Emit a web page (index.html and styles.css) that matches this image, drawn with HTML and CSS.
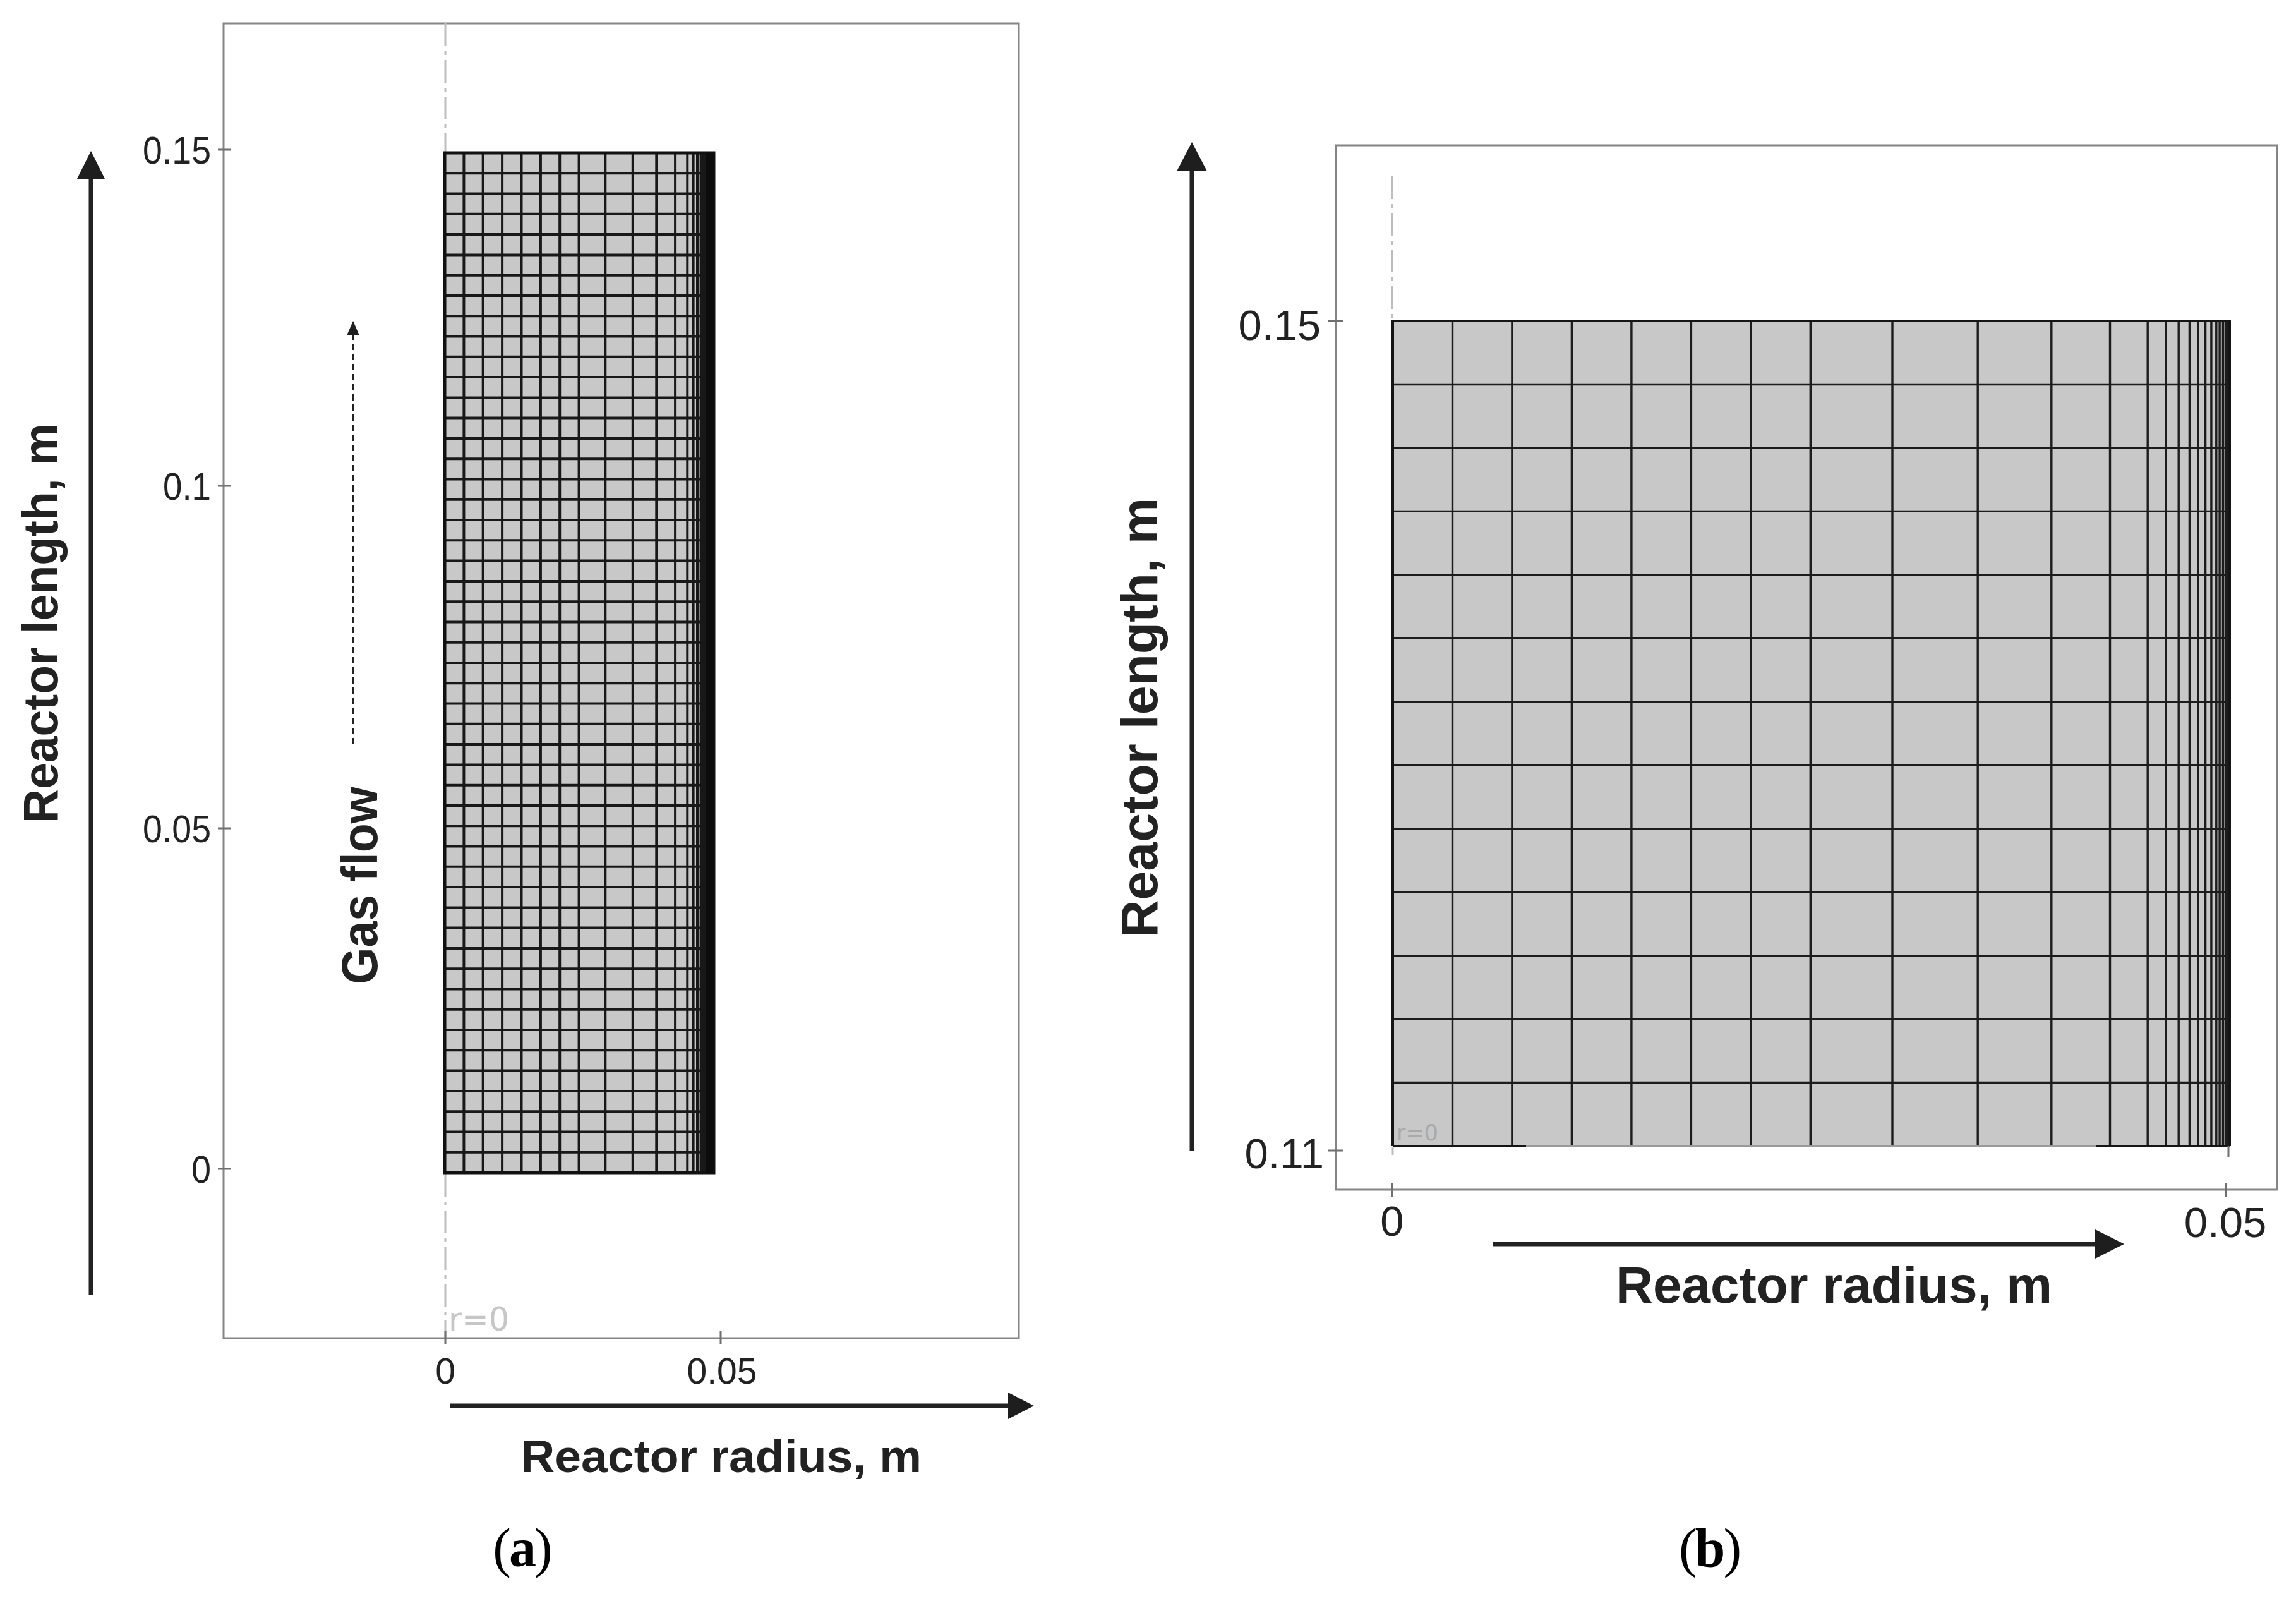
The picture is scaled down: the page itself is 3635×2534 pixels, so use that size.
FILE: index.html
```html
<!DOCTYPE html>
<html lang="en">
<head>
<meta charset="utf-8">
<title>Reactor mesh</title>
<link rel="stylesheet" href="styles.css">
</head>
<body>
<main class="sheet">
  <figure class="panel panel-a">
    <svg class="plot plot-a" width="1720" height="2400" viewBox="0 0 1720 2400" xmlns="http://www.w3.org/2000/svg">
      <!-- frame -->
      <rect class="frame" x="354" y="37" width="1259" height="2081"/>
      <!-- symmetry axis -->
      <path class="axis-line" d="M705 37V240M705 1858V2118"/>
      <!-- mesh -->
      <rect class="mesh-fill" x="704" y="242" width="426" height="1614"/>
      <path class="mesh-a" d="M704 274.3H1130M704 306.6H1130M704 338.8H1130M704 371.1H1130M704 403.4H1130M704 435.7H1130M704 468H1130M704 500.2H1130M704 532.5H1130M704 564.8H1130M704 597.1H1130M704 629.4H1130M704 661.6H1130M704 693.9H1130M704 726.2H1130M704 758.5H1130M704 790.8H1130M704 823H1130M704 855.3H1130M704 887.6H1130M704 919.9H1130M704 952.2H1130M704 984.4H1130M704 1016.7H1130M704 1049H1130M704 1081.3H1130M704 1113.6H1130M704 1145.8H1130M704 1178.1H1130M704 1210.4H1130M704 1242.7H1130M704 1275H1130M704 1307.2H1130M704 1339.5H1130M704 1371.8H1130M704 1404.1H1130M704 1436.4H1130M704 1468.6H1130M704 1500.9H1130M704 1533.2H1130M704 1565.5H1130M704 1597.8H1130M704 1630H1130M704 1662.3H1130M704 1694.6H1130M704 1726.9H1130M704 1759.2H1130M704 1791.4H1130M704 1823.7H1130"/>
      <path class="mesh-a" d="M734.4 242V1856M764.7 242V1856M795.1 242V1856M825.5 242V1856M855.9 242V1856M886.2 242V1856M916.6 242V1856M958.3 242V1856M1001.8 242V1856M1039.3 242V1856M1069.1 242V1856M1088.3 242V1856M1097.6 242V1856M1104 242V1856M1109.6 242V1856M1113.8 242V1856M1117.6 242V1856M1120.6 242V1856M1123.2 242V1856M1124.9 242V1856M1126.6 242V1856M1127.9 242V1856"/>
      <rect class="mesh-border-a" x="704" y="242" width="426" height="1614"/>
      <path class="mesh-band-a" d="M1124 242V1856"/>
      <!-- ticks -->
      <path class="tick-mark" d="M345 237H365M345 769H365M345 1311H365M345 1850H365M705 2107V2127M1141 2107V2127"/>
      <text class="tick-label" x="334" y="259" text-anchor="end" font-size="62" textLength="108" lengthAdjust="spacingAndGlyphs">0.15</text>
      <text class="tick-label" x="334" y="791" text-anchor="end" font-size="62" textLength="76" lengthAdjust="spacingAndGlyphs">0.1</text>
      <text class="tick-label" x="334" y="1333" text-anchor="end" font-size="62" textLength="108" lengthAdjust="spacingAndGlyphs">0.05</text>
      <text class="tick-label" x="334" y="1872" text-anchor="end" font-size="62" textLength="31" lengthAdjust="spacingAndGlyphs">0</text>
      <text class="tick-label" x="705" y="2190" text-anchor="middle" font-size="57">0</text>
      <text class="tick-label" x="1143" y="2190" text-anchor="middle" font-size="57">0.05</text>
      <text class="sym-label" x="710" y="2106" font-size="51">r=0</text>
      <!-- axis arrows -->
      <path class="arrow-shaft" d="M144 2050V278"/>
      <polygon class="arrow-head" points="122,283 166,283 144,239"/>
      <path class="arrow-shaft" d="M713 2225H1600"/>
      <polygon class="arrow-head" points="1596,2204 1596,2246 1637,2225"/>
      <!-- gas flow arrow -->
      <path class="flow-shaft" d="M559 1178V528"/>
      <polygon class="arrow-head" points="549,531 569,531 559,508"/>
      <!-- titles -->
      <text class="axis-title" transform="translate(91 986.5) rotate(-90)" text-anchor="middle" font-size="78" textLength="633" lengthAdjust="spacingAndGlyphs">Reactor length, m</text>
      <text class="axis-title" transform="translate(597 1401.5) rotate(-90)" text-anchor="middle" font-size="80" textLength="313" lengthAdjust="spacingAndGlyphs">Gas flow</text>
      <text class="axis-title" x="1141.5" y="2330" text-anchor="middle" font-size="73" textLength="635" lengthAdjust="spacingAndGlyphs">Reactor radius, m</text>
    </svg>
    <figcaption>(<b>a</b>)</figcaption>
  </figure>

  <figure class="panel panel-b">
    <svg class="plot plot-b" width="1915" height="2400" viewBox="1720 0 1915 2400" xmlns="http://www.w3.org/2000/svg">
      <rect class="frame" x="2115" y="230" width="1490" height="1653"/>
      <path class="axis-line" d="M2204 279V506M2205 1816V1828"/>
      <rect class="mesh-fill" x="2205" y="508" width="1325" height="1306"/>
      <path class="mesh-b" d="M2205 608.5H3530M2205 708.9H3530M2205 809.4H3530M2205 909.8H3530M2205 1010.3H3530M2205 1110.8H3530M2205 1211.2H3530M2205 1311.7H3530M2205 1412.1H3530M2205 1512.6H3530M2205 1613.1H3530M2205 1713.5H3530"/>
      <path class="mesh-b" d="M2299.5 508V1814M2393.9 508V1814M2488.4 508V1814M2582.9 508V1814M2677.4 508V1814M2771.8 508V1814M2866.3 508V1814M2996 508V1814M3131.2 508V1814M3247.8 508V1814M3340.5 508V1814M3400.2 508V1814M3429.3 508V1814M3449.2 508V1814M3466.4 508V1814M3479.7 508V1814M3491.6 508V1814M3500.9 508V1814M3508.8 508V1814M3514.1 508V1814M3519.4 508V1814M3523.4 508V1814M3526.7 508V1814M3528.6 508V1814"/>
      <path class="mesh-edge-soft" d="M2416 1814H3318"/>
      <path class="mesh-border-b" d="M2205 1814V508H3530V1814M2205 1814H2416M3318 1814H3530"/>
      <path class="tick-mark" d="M2103 508H2127M2103 1821H2127M2204 1872V1895M3524 1872V1895M3528 1814V1832"/>
      <text class="tick-label" x="2091" y="538" text-anchor="end" font-size="67">0.15</text>
      <text class="tick-label" x="2096" y="1849" text-anchor="end" font-size="67">0.11</text>
      <text class="tick-label" x="2204" y="1956" text-anchor="middle" font-size="67">0</text>
      <text class="tick-label" x="3523" y="1958" text-anchor="middle" font-size="67">0.05</text>
      <text class="sym-label sym-label-b" x="2211" y="1805" font-size="35">r=0</text>
      <path class="arrow-shaft" d="M1887 1821V266"/>
      <polygon class="arrow-head" points="1863,271 1911,271 1887,225"/>
      <path class="arrow-shaft" d="M2364 1969H3320"/>
      <polygon class="arrow-head" points="3317,1946 3317,1992 3363,1969"/>
      <text class="axis-title" transform="translate(1832 1136) rotate(-90)" text-anchor="middle" font-size="82" textLength="696" lengthAdjust="spacingAndGlyphs">Reactor length, m</text>
      <text class="axis-title" x="2903.5" y="2062" text-anchor="middle" font-size="82" textLength="691" lengthAdjust="spacingAndGlyphs">Reactor radius, m</text>
    </svg>
    <figcaption>(<b>b</b>)</figcaption>
  </figure>
</main>
</body>
</html>
```

FILE: styles.css
```css
html, body {
  margin: 0;
  padding: 0;
  background: #ffffff;
}

.sheet {
  display: flex;
  flex-direction: row;
  width: 3635px;
  height: 2534px;
  overflow: hidden;
  background: #ffffff;
}

.panel {
  margin: 0;
  display: flex;
  flex-direction: column;
}

.panel-a {
  width: 1720px;
}

.panel-b {
  width: 1915px;
}

.plot {
  display: block;
}

.panel figcaption {
  font-family: "Liberation Serif", "Times New Roman", serif;
  font-size: 86px;
  line-height: 100px;
  text-align: center;
  color: #000000;
  letter-spacing: -3px;
}

.panel-a figcaption {
  padding-right: 68px;
}

.panel-b figcaption {
  padding-left: 57px;
}

.panel figcaption b {
  font-weight: bold;
}

/* plot elements */
.frame {
  fill: none;
  stroke: #858585;
  stroke-width: 3;
}

.axis-line {
  fill: none;
  stroke: #bdbdbd;
  stroke-width: 3;
  stroke-dasharray: 36 8 6 8;
}

.mesh-fill {
  fill: #c8c8c8;
}

.mesh-a {
  fill: none;
  stroke: #181818;
  stroke-width: 4;
}

.mesh-border-a {
  fill: none;
  stroke: #111111;
  stroke-width: 5;
}

.mesh-band-a {
  fill: none;
  stroke: #0c0c0c;
  stroke-width: 12;
}

.mesh-b {
  fill: none;
  stroke: #1c1c1c;
  stroke-width: 3.4;
}

.mesh-edge-soft {
  fill: none;
  stroke: #9a9a9a;
  stroke-width: 2;
}

.mesh-border-b {
  fill: none;
  stroke: #151515;
  stroke-width: 4;
}

.tick-mark {
  fill: none;
  stroke: #6f6f6f;
  stroke-width: 3;
}

.tick-label {
  font-family: "Liberation Sans", Arial, sans-serif;
  fill: #222222;
}

.sym-label {
  font-family: "DejaVu Sans", sans-serif;
  fill: #c6c6c6;
}

.sym-label-b {
  fill: #a9a9a9;
}

.arrow-shaft {
  fill: none;
  stroke: #222222;
  stroke-width: 7;
}

.flow-shaft {
  fill: none;
  stroke: #222222;
  stroke-width: 4;
  stroke-dasharray: 10 6;
}

.arrow-head {
  fill: #1e1e1e;
}

.axis-title {
  font-family: "Liberation Sans", Arial, sans-serif;
  font-weight: bold;
  fill: #222222;
}
```
